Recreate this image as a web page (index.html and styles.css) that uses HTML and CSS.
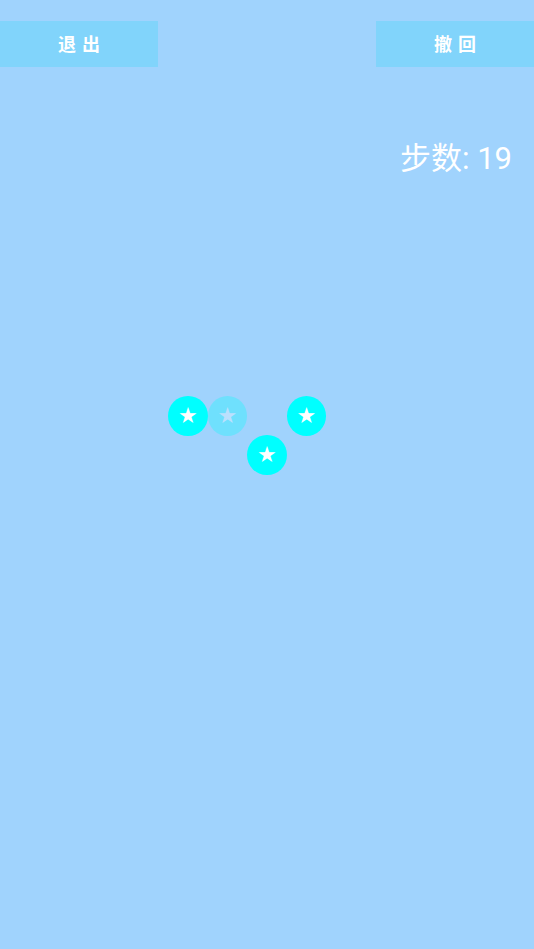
FILE: index.html
```html
<!DOCTYPE html>
<html lang="zh">
<head>
<meta charset="utf-8">
<link rel="stylesheet" href="styles.css">
</head>
<body>
<div class="screen">
  <div class="topbar">
    <div class="btn">退出</div>
    <div class="btn">撤回</div>
  </div>
  <div class="steps">步数: 19</div>
  <div class="board">
    <div class="cell c1 r1"><span class="dot">★</span></div>
    <div class="cell c2 r1"><span class="dot faded">★</span></div>
    <div class="cell c4 r1"><span class="dot">★</span></div>
    <div class="cell c3 r2"><span class="dot">★</span></div>
  </div>
</div>
</body>
</html>
```
FILE: styles.css
```css
html, body {
  margin: 0;
  padding: 0;
  background: #a0d3fd;
}
.screen {
  width: 534px;
  height: 949px;
  background: #a0d3fd;
  font-family: "Noto Sans CJK SC", "Noto Sans", sans-serif;
  overflow: hidden;
}
.topbar {
  display: flex;
  justify-content: space-between;
  padding-top: 21px;
}
.btn {
  width: 158px;
  height: 46px;
  background: #81d4fb;
  color: #fff;
  font-weight: 700;
  font-size: 18px;
  line-height: 20px;
  letter-spacing: 6px;
  text-indent: 6px;
  display: flex;
  align-items: center;
  justify-content: center;
  padding-bottom: 3px;
  box-sizing: border-box;
}
.steps {
  margin-top: 71px;
  padding-right: 22px;
  text-align: right;
  color: #fff;
  font-family: "Roboto", "Noto Sans CJK SC", sans-serif;
  font-size: 31px;
  line-height: 42px;
  font-weight: 400;
}
.board {
  margin-top: 216px;
  margin-left: 168px;
  display: grid;
  grid-template-columns: repeat(4, 39.5px);
  grid-template-rows: repeat(2, 39.5px);
}
.cell { display: flex; align-items: center; justify-content: center; }
.c1 { grid-column: 1; }
.c2 { grid-column: 2; }
.c3 { grid-column: 3; }
.c4 { grid-column: 4; }
.r1 { grid-row: 1; }
.r2 { grid-row: 2; }
.dot {
  width: 40px;
  height: 40px;
  border-radius: 50%;
  background: #00ffff;
  color: #fff;
  font-family: "DejaVu Sans", sans-serif;
  font-size: 22px;
  display: flex;
  align-items: center;
  justify-content: center;
  line-height: 1;
}
.dot.faded { opacity: 0.3; }
```
